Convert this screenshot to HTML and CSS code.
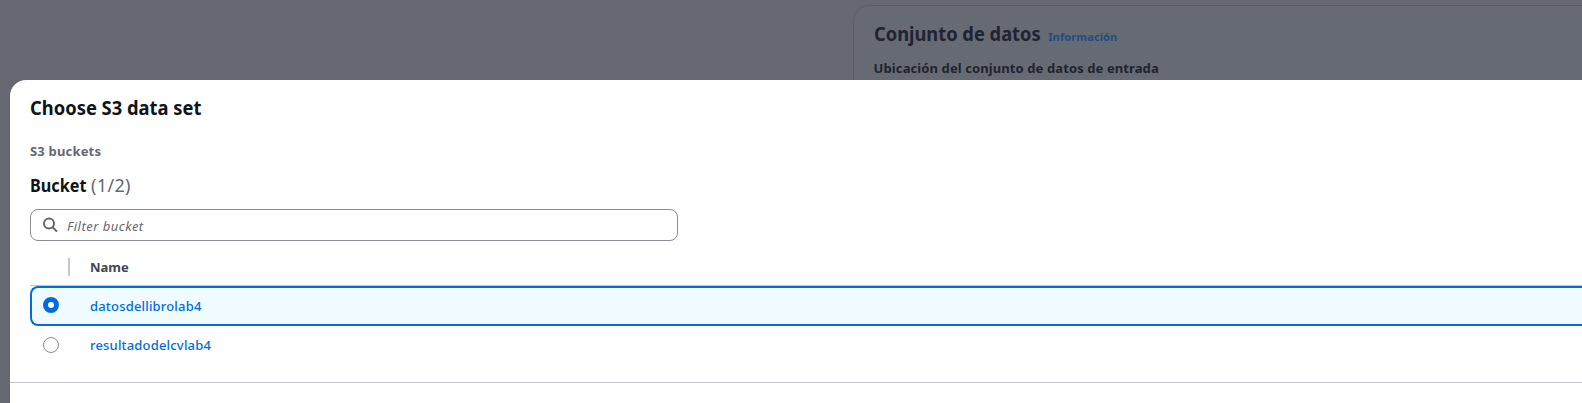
FILE: index.html
```html
<!DOCTYPE html>
<html lang="es">
<head>
<meta charset="utf-8">
<title>Choose S3 data set</title>
<link rel="stylesheet" href="styles.css">
</head>
<body>
<div class="page">
  <section class="card">
    <div class="card-head"><h2 class="card-title">Conjunto de datos</h2><a class="info">Información</a></div>
    <div class="field-label"><span>Ubicación del conjunto de datos de entrada</span></div>
  </section>
</div>
<main class="modal">
  <div class="modal-body">
    <h1 class="title">Choose S3 data set</h1>
    <div class="crumb"><span>S3 buckets</span></div>
    <h2 class="subtitle"><span class="bucket">Bucket</span><span class="counter">(1/2)</span></h2>
    <div class="search">
      <svg class="search-icon" viewBox="0 0 16 16"><circle cx="7" cy="6.6" r="5" /><path d="M10.6 10.3 15 14.6" /></svg>
      <span class="placeholder">Filter bucket</span>
    </div>
    <div class="table">
      <div class="thead"><div class="select-head"></div><span class="th">Name</span></div>
      <div class="row selected"><i class="radio checked"></i><a class="link first">datosdellibrolab4</a></div>
      <div class="row"><i class="radio"></i><a class="link second">resultadodelcvlab4</a></div>
    </div>
  </div>
  <footer class="footer"></footer>
</main>
</body>
</html>
```
FILE: styles.css
```css
* { box-sizing: border-box; }
body { margin: 0; height: 403px; overflow: hidden; background: #656871; font-family: "Noto Sans", "Open Sans", sans-serif; font-size: 13px; color: #0f141a; display: flex; flex-direction: column; }
h1, h2 { margin: 0; white-space: nowrap; }
span, a { white-space: nowrap; }
.page { height: 80px; flex: none; padding: 5px 0 0 853px; overflow: hidden; }
.card { width: 760px; height: 120px; border: 1px solid #575c6b; border-radius: 16px; background: #666a72; padding: 14px 19px 14px 19.6px; color: #1e2431; }
.card-head { display: flex; align-items: baseline; height: 27px; line-height: 27px; }
.card-title { width: 174.6px; font-size: 20px; font-weight: 700; transform: scaleX(0.914); transform-origin: 0 50%; }
.info { font-size: 11px; font-weight: 700; color: #1f4a88; letter-spacing: 0.13px; }
.field-label { font-weight: 700; line-height: 20px; margin-top: 11px; letter-spacing: 0.1px; }
.modal { margin-left: 10px; height: 323px; flex: none; background: #fff; border-radius: 16px 0 0 0; width: 1572px; }
.modal-body { height: 303px; padding: 14px 0 0 20px; border-bottom: 1px solid #c6c6cd; }
.title { font-size: 20px; line-height: 27px; font-weight: 700; transform: scaleX(0.918); transform-origin: 0 50%; }
.crumb { margin-top: 20px; line-height: 20px; font-weight: 700; color: #656871; letter-spacing: 0.18px; }
.subtitle { margin-top: 12px; height: 24px; line-height: 24px; display: flex; font-size: 18px; }
.bucket { width: 61px; transform: scaleX(0.9); transform-origin: 0 50%; }
.counter { font-weight: 400; color: #656871; letter-spacing: 0.35px; }
.search { margin-top: 12px; width: 648px; height: 32px; border: 1px solid #8c8c94; border-radius: 8px; display: flex; align-items: center; padding-left: 11px; gap: 9px; color: #656871; }
.search-icon { width: 16px; height: 16px; fill: none; stroke: #656871; stroke-width: 2; }
.placeholder { font-style: italic; line-height: 20px; padding-top: 1px; letter-spacing: 0.5px; }
.thead { height: 45px; display: flex; align-items: center; border-bottom: 1px solid #c6c6cd; padding-top: 8px; }
.select-head { width: 40px; height: 18px; margin-right: 20px; border-right: 2px solid #c6c6cd; }
.th { font-weight: 700; color: #424650; line-height: 18px; padding-bottom: 1px; }
.row { height: 40px; display: flex; align-items: center; padding-left: 13px; gap: 31px; }
.row.selected { border: 2px solid #006ce0; border-right: 0; border-radius: 8px 0 0 8px; background: #f0fbff; padding-left: 11px; }
.radio { width: 16px; height: 16px; border: 1px solid #8c8c94; border-radius: 50%; background: #fff; margin-top: -2px; }
.radio.checked { border: 5px solid #006ce0; }
.link { color: #006ce0; line-height: 20px; font-weight: 500; letter-spacing: 0.18px; }
.second { padding-bottom: 2px; }
```
